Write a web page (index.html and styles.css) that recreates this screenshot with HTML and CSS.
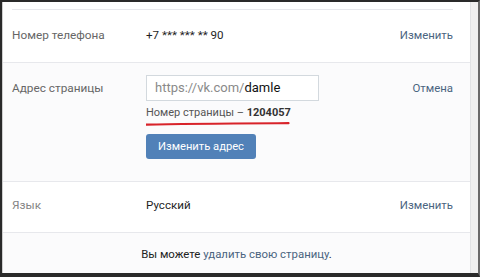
FILE: index.html
```html
<!DOCTYPE html>
<html lang="ru">
<head>
<meta charset="utf-8">
<link rel="stylesheet" href="styles.css">
</head>
<body>
<div class="frame">
  <div class="panel">
    <div class="top-gap"><div class="top-line"></div></div>

    <div class="row row-phone">
      <div class="label">Номер телефона</div>
      <div class="value">+7 *** *** ** 90</div>
      <a class="action">Изменить</a>
    </div>

    <div class="row row-address">
      <div class="label label-addr">Адрес страницы</div>
      <div class="value">
        <div class="input"><span class="prefix">https://vk.com/</span><span class="nick">damle</span></div>
        <div class="page-id">Номер страницы – <b>1204057</b></div>
        <svg class="underline" width="146" height="6" viewBox="0 0 146 6">
          <path d="M0.5 3.6 C 40 2.6, 100 2.4, 142.5 2.2" stroke="#d8232a" stroke-width="2.2" fill="none" stroke-linecap="round"/>
        </svg>
        <button class="btn">Изменить адрес</button>
      </div>
      <a class="action action-addr">Отмена</a>
    </div>

    <div class="row row-lang">
      <div class="label label-light">Язык</div>
      <div class="value">Русский</div>
      <a class="action">Изменить</a>
    </div>

    <div class="footer">Вы можете <a class="link">удалить свою страницу</a>.</div>
  </div>
  <div class="gutter"></div>
</div>
</body>
</html>
```

FILE: styles.css
```css
html, body {
  margin: 0;
  padding: 0;
  background: #1c1c1c;
}
body {
  width: 480px;
  height: 277px;
  overflow: hidden;
  font-family: Roboto, "Open Sans", "Liberation Sans", sans-serif;
  font-size: 11.4px;
  line-height: 16px;
  color: #222;
}
.frame {
  display: flex;
  width: 476px;
  height: 271px;
  border-top: 2px solid #2a2a2a;
  border-left: 2px solid #2a2a2a;
  border-right: 2px solid #6a6a6a;
  border-bottom: 4px solid #2a2a2a;
  background: #f2f2f2;
}
.panel {
  width: 467px;
  background: #fff;
  border-left: 1px solid #cfcfcf;
  border-right: 1px solid #e2e3e5;
  display: flex;
  flex-direction: column;
}
.gutter {
  flex: 1;
  background: #f0f0f0;
}
.top-gap {
  height: 8px;
  padding: 0 17px 0 9px;
  display: flex;
  align-items: flex-end;
}
.top-line {
  flex: 1;
  height: 1px;
  background: #e7e8ec;
}
.row {
  display: flex;
  align-items: flex-start;
  padding: 0 17px 0 9px;
  border-bottom: 1px solid #e7e8ec;
}
.row-phone {
  padding-top: 17px;
  padding-bottom: 19px;
}
.row-address {
  background: #fbfbfc;
  padding-top: 12px;
  padding-bottom: 22px;
}
.row-lang {
  padding-top: 15px;
  padding-bottom: 19px;
}
.label {
  width: 134px;
  flex: none;
  font-size: 11.8px;
  color: #666;
}
.label-addr {
  padding-top: 5px;
}
.label-light {
  color: #858585;
}
.value {
  flex: 1;
  font-size: 11.6px;
  color: #1f1f1f;
}
.action {
  color: #4a6480;
  cursor: pointer;
}
.action-addr {
  padding-top: 5px;
}
.input {
  width: 163px;
  height: 24px;
  line-height: 24px;
  padding-left: 8px;
  border: 1px solid #d3d9de;
  background: #fff;
  font-size: 13px;
}
.prefix {
  color: #8a8a8a;
}
.nick {
  color: #111;
}
.page-id {
  margin-top: 4px;
  font-size: 11px;
  color: #555;
}
.page-id b {
  color: #333;
  font-weight: 700;
}
.underline {
  display: block;
}
.btn {
  display: block;
  margin-top: 7px;
  width: 110px;
  height: 25px;
  padding: 0;
  border: none;
  border-radius: 3px;
  background: #5181b8;
  color: #fff;
  font-family: inherit;
  font-size: 11.2px;
}
.footer {
  flex: 1;
  background: #fbfbfc;
  text-align: center;
  padding-top: 13px;
  color: #222;
}
.link {
  color: #4a6480;
  cursor: pointer;
}
```
